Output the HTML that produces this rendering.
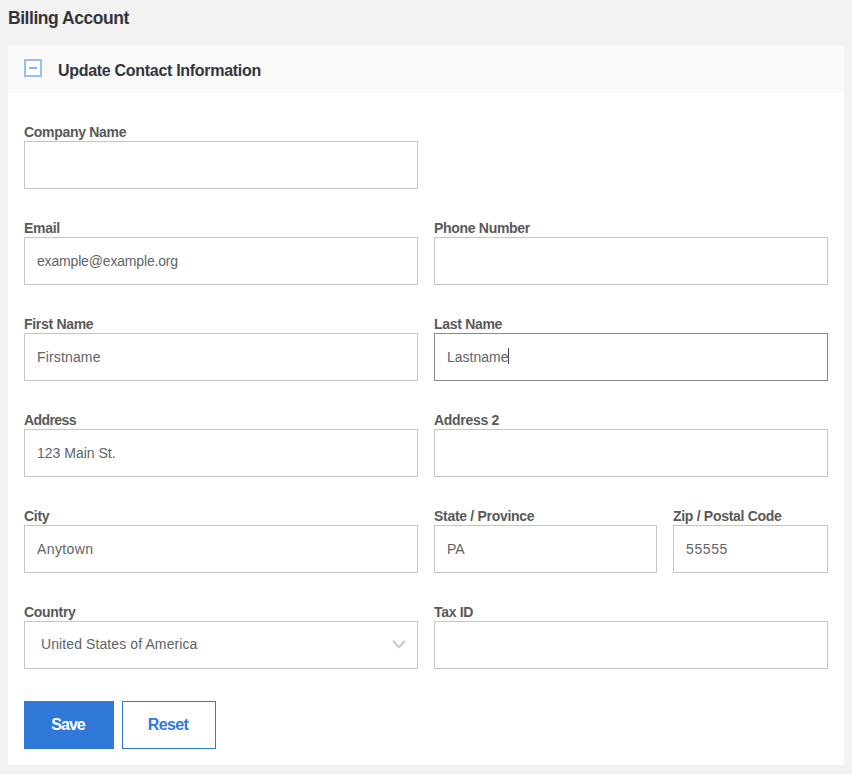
<!DOCTYPE html>
<html>
<head>
<meta charset="utf-8">
<style>
html,body{margin:0;padding:0;}
body{width:852px;height:774px;background:#f2f2f2;position:relative;overflow:hidden;font-family:"Liberation Sans",sans-serif;}
.abs{position:absolute;}
.title{left:8px;top:8px;font-size:17.5px;font-weight:700;color:#32363c;white-space:nowrap;letter-spacing:-0.45px;}
.panel{left:8px;top:45px;width:836px;height:720px;background:#fff;}
.phead{left:0;top:0;width:836px;height:48px;background:#f9f9f9;}
.ptitle{left:50px;top:17px;font-size:16px;font-weight:700;color:#32363c;white-space:nowrap;letter-spacing:-0.3px;}
.icon{left:16px;top:14px;width:14px;height:14px;border:2px solid #97c0f3;background:#fff;}
.icon i{position:absolute;left:3px;top:6px;width:8px;height:2px;background:#8bb4ea;}
.lbl{font-size:14px;font-weight:700;color:#595959;white-space:nowrap;letter-spacing:-0.3px;margin-top:1px;}
.inp{box-sizing:border-box;height:48px;border:1px solid #c6c6c6;background:#fff;}
.inp.focus{border-color:#888;}
.val{position:absolute;left:12px;top:15px;font-size:14px;color:#606469;white-space:nowrap;}
.btn{box-sizing:border-box;height:48px;padding-right:2px;font-size:16px;font-weight:700;text-align:center;line-height:46px;}
.save{background:#3079d8;color:#fff;border:1px solid #3079d8;}
.reset{background:#fff;color:#3079d8;border:1px solid #3079d8;}
</style>
</head>
<body>
<div class="abs title">Billing Account</div>
<div class="abs panel">
  <div class="abs phead">
    <div class="abs icon"><i></i></div>
    <div class="abs ptitle">Update Contact Information</div>
  </div>
</div>

<!-- Row 1 -->
<div class="abs lbl" style="left:24px;top:123px;">Company Name</div>
<div class="abs inp" style="left:24px;top:141px;width:394px;"></div>

<!-- Row 2 -->
<div class="abs lbl" style="left:24px;top:219px;">Email</div>
<div class="abs inp" style="left:24px;top:237px;width:394px;"><span class="val" style="letter-spacing:-0.17px">example@example.org</span></div>
<div class="abs lbl" style="left:434px;top:219px;">Phone Number</div>
<div class="abs inp" style="left:434px;top:237px;width:394px;"></div>

<!-- Row 3 -->
<div class="abs lbl" style="left:24px;top:315px;">First Name</div>
<div class="abs inp" style="left:24px;top:333px;width:394px;"><span class="val" style="letter-spacing:0.15px">Firstname</span></div>
<div class="abs lbl" style="left:434px;top:315px;">Last Name</div>
<div class="abs inp focus" style="left:434px;top:333px;width:394px;"><span class="val">Lastname</span><i class="abs" style="left:73px;top:14px;width:1px;height:16px;background:#444"></i></div>

<!-- Row 4 -->
<div class="abs lbl" style="left:24px;top:411px;letter-spacing:-0.6px">Address</div>
<div class="abs inp" style="left:24px;top:429px;width:394px;"><span class="val">123 Main St.</span></div>
<div class="abs lbl" style="left:434px;top:411px;">Address 2</div>
<div class="abs inp" style="left:434px;top:429px;width:394px;"></div>

<!-- Row 5 -->
<div class="abs lbl" style="left:24px;top:507px;">City</div>
<div class="abs inp" style="left:24px;top:525px;width:394px;"><span class="val" style="letter-spacing:0.4px">Anytown</span></div>
<div class="abs lbl" style="left:434px;top:507px;">State / Province</div>
<div class="abs inp" style="left:434px;top:525px;width:223px;"><span class="val">PA</span></div>
<div class="abs lbl" style="left:673px;top:507px;">Zip / Postal Code</div>
<div class="abs inp" style="left:673px;top:525px;width:155px;"><span class="val" style="letter-spacing:0.6px">55555</span></div>

<!-- Row 6 -->
<div class="abs lbl" style="left:24px;top:603px;">Country</div>
<div class="abs inp" style="left:24px;top:621px;width:394px;"><span class="val" style="left:16px;top:14px;letter-spacing:0.1px">United States of America</span>
  <svg class="abs" style="left:0;top:0" width="394" height="48"><polyline points="368,18.8 374,25.3 380,18.8" fill="none" stroke="#c9c9c9" stroke-width="2"/></svg>
</div>
<div class="abs lbl" style="left:434px;top:603px;">Tax ID</div>
<div class="abs inp" style="left:434px;top:621px;width:394px;"></div>

<!-- Buttons -->
<div class="abs btn save" style="left:24px;top:701px;width:90px;letter-spacing:-1px;">Save</div>
<div class="abs btn reset" style="left:122px;top:701px;width:94px;letter-spacing:-0.6px;">Reset</div>
</body>
</html>
